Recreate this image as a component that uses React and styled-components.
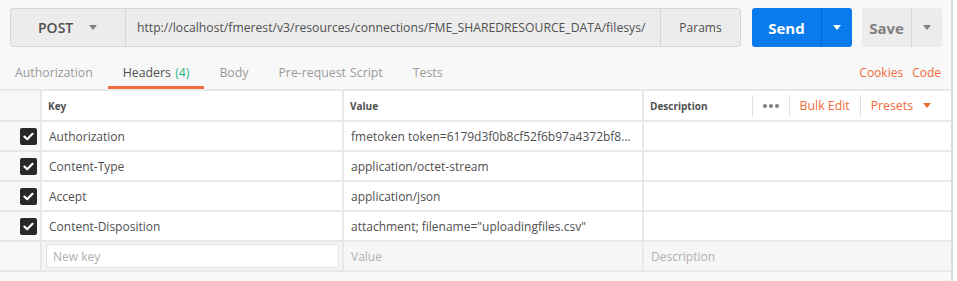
import React from "react"
import styled, { createGlobalStyle } from "styled-components"

const GlobalStyle = createGlobalStyle`
  html, body {
    margin: 0;
    padding: 0;
    background: #ffffff;
  }
  body {
    font-family: "Open Sans", "Liberation Sans", sans-serif;
    color: #505050;
  }
`

const Page = styled.div`
  width: 953px;
  height: 281px;
  box-sizing: border-box;
  background: #f8f8f8;
  border-right: 2px solid #dcdcdc;
  overflow: hidden;
`

const TopBar = styled.div`
  display: flex;
  align-items: stretch;
  padding: 8px 0 0 10px;
  height: 47px;
  box-sizing: border-box;
`

const UrlGroup = styled.div`
  display: flex;
  width: 731px;
  height: 39px;
  box-sizing: border-box;
  background: #ececec;
  border: 1px solid #d6d6d6;
  border-radius: 3px;
`

const MethodSelect = styled.div`
  width: 115px;
  display: flex;
  align-items: center;
  padding-left: 27px;
  box-sizing: border-box;
  font-size: 14px;
  font-weight: 600;
  color: #505050;
  border-right: 1px solid #d6d6d6;
  gap: 16px;
`

const Caret = styled.span`
  display: inline-block;
  width: 0;
  height: 0;
  border-left: ${(p) => p.size || 4}px solid transparent;
  border-right: ${(p) => p.size || 4}px solid transparent;
  border-top: ${(p) => (p.size || 4) + 1}px solid ${(p) => p.color || "#808080"};
`

const UrlText = styled.div`
  flex: 1;
  display: flex;
  align-items: center;
  padding-left: 11px;
  font-size: 12.2px;
  color: #505050;
  border-right: 1px solid #d6d6d6;
  white-space: nowrap;
  overflow: hidden;
`

const ParamsButton = styled.div`
  width: 79px;
  flex: none;
  display: flex;
  align-items: center;
  justify-content: center;
  font-size: 12px;
  color: #505050;
`

const SplitButton = styled.div`
  display: flex;
  width: ${(p) => p.width}px;
  height: 39px;
  margin-left: ${(p) => p.gap}px;
  border-radius: 3px;
  background: ${(p) => (p.primary ? "#097bed" : "#ececec")};
  color: ${(p) => (p.primary ? "#ffffff" : "#808080")};
  font-size: 15px;
  font-weight: 700;
`

const ButtonLabel = styled.div`
  flex: 1;
  display: flex;
  align-items: center;
  justify-content: center;
`

const ButtonArrow = styled.div`
  width: 30px;
  display: flex;
  align-items: center;
  justify-content: center;
  border-left: 1px solid ${(p) => (p.primary ? "#0468cf" : "#dadada")};
`

const TabRow = styled.div`
  display: flex;
  align-items: flex-end;
  height: 42px;
  box-sizing: border-box;
`

const Tab = styled.div`
  height: 32px;
  box-sizing: border-box;
  padding: 7px 15px 0;
  line-height: 18px;
  font-size: 12.3px;
  color: ${(p) => (p.active ? "#505050" : "#9a9a9a")};
  border-bottom: 3px solid ${(p) => (p.active ? "#f26b3a" : "transparent")};
  white-space: nowrap;
  word-spacing: 1px;
`

const Count = styled.span`
  color: #26b47f;
`

const TabLinks = styled.div`
  margin-left: auto;
  display: flex;
  gap: 9px;
  padding-right: 10px;
  height: 32px;
  box-sizing: border-box;
  padding-top: 7px;
  line-height: 18px;
`

const OrangeLink = styled.span`
  font-size: 12px;
  color: #f26b3a;
`

const Table = styled.div`
  display: grid;
  grid-template-columns: 40px 300px 298px 1fr;
  grid-auto-rows: 28px;
  grid-template-rows: 29px;
  gap: 2px;
  width: 951px;
  background: #e8e8e8;
  border-top: 2px solid #e8e8e8;
  border-bottom: 2px solid #e8e8e8;
`

const CheckCell = styled.div`
  background: #f8f8f8;
  display: flex;
  align-items: center;
  justify-content: flex-end;
  padding-right: 3px;
`

const HeadCell = styled.div`
  background: #ffffff;
  display: flex;
  align-items: center;
  padding-left: 6px;
  font-size: 10px;
  font-weight: 700;
  color: #505050;
`

const Cell = styled.div`
  background: ${(p) => (p.muted ? "#f6f6f6" : "#ffffff")};
  display: flex;
  align-items: center;
  padding-left: 7px;
  font-size: 12px;
  color: ${(p) => (p.placeholder ? "#b0b0b0" : "#505050")};
  white-space: nowrap;
  overflow: hidden;
`

const NewKeyInput = styled.div`
  flex: 1;
  margin: 0 3px 0 -3px;
  height: 24px;
  box-sizing: border-box;
  background: #ffffff;
  border: 1px solid #e3e3e3;
  display: flex;
  align-items: center;
  padding-left: 6px;
  color: #b0b0b0;
`

const Tools = styled.div`
  margin-left: auto;
  display: flex;
  align-items: center;
  height: 100%;
  padding-right: 10px;
`

const Divider = styled.span`
  width: 1px;
  height: 22px;
  background: #e3e3e3;
`

const ToolItem = styled.span`
  display: flex;
  align-items: center;
  gap: 10px;
  padding: 0 10px;
  font-size: 12.3px;
  font-weight: 400;
  color: #f26b3a;
`

const Dots = styled.span`
  display: flex;
  gap: 2px;
  padding: 0 10px;
  span {
    width: 4px;
    height: 4px;
    border-radius: 50%;
    background: #808080;
  }
`

const Box = styled.div`
  width: 17px;
  height: 17px;
  border-radius: 2px;
  background: #282828;
  display: flex;
  align-items: center;
  justify-content: center;
`

const Checkbox = () => (
  <Box>
    <svg width="11" height="9" viewBox="0 0 11 9">
      <path d="M1.5 4.6 L4.2 7.2 L9.5 1.8" fill="none" stroke="#ffffff" strokeWidth="2.2" strokeLinecap="round" strokeLinejoin="round" />
    </svg>
  </Box>
)

const headers = [
  ["Authorization", "fmetoken token=6179d3f0b8cf52f6b97a4372bf8..."],
  ["Content-Type", "application/octet-stream"],
  ["Accept", "application/json"],
  ["Content-Disposition", 'attachment; filename="uploadingfiles.csv"'],
]

const App = () => {
  return (
    <>
      <GlobalStyle />
      <Page>
        <TopBar>
          <UrlGroup>
            <MethodSelect>
              POST <Caret />
            </MethodSelect>
            <UrlText>http://localhost/fmerest/v3/resources/connections/FME_SHAREDRESOURCE_DATA/filesys/</UrlText>
            <ParamsButton>Params</ParamsButton>
          </UrlGroup>
          <SplitButton primary width={100} gap={11}>
            <ButtonLabel>Send</ButtonLabel>
            <ButtonArrow primary>
              <Caret color="#ffffff" />
            </ButtonArrow>
          </SplitButton>
          <SplitButton width={80} gap={10}>
            <ButtonLabel>Save</ButtonLabel>
            <ButtonArrow>
              <Caret />
            </ButtonArrow>
          </SplitButton>
        </TopBar>

        <TabRow>
          <Tab>Authorization</Tab>
          <Tab active>
            Headers <Count>(4)</Count>
          </Tab>
          <Tab>Body</Tab>
          <Tab>Pre-request Script</Tab>
          <Tab>Tests</Tab>
          <TabLinks>
            <OrangeLink>Cookies</OrangeLink>
            <OrangeLink>Code</OrangeLink>
          </TabLinks>
        </TabRow>

        <Table>
          <CheckCell />
          <HeadCell>Key</HeadCell>
          <HeadCell>Value</HeadCell>
          <HeadCell>
            Description
            <Tools>
              <Divider />
              <Dots>
                <span />
                <span />
                <span />
              </Dots>
              <Divider />
              <ToolItem>Bulk Edit</ToolItem>
              <Divider />
              <ToolItem>
                Presets <Caret color="#f26b3a" />
              </ToolItem>
            </Tools>
          </HeadCell>

          {headers.map(([key, value]) => (
            <React.Fragment key={key}>
              <CheckCell>
                <Checkbox />
              </CheckCell>
              <Cell>{key}</Cell>
              <Cell>{value}</Cell>
              <Cell />
            </React.Fragment>
          ))}

          <CheckCell />
          <Cell muted>
            <NewKeyInput>New key</NewKeyInput>
          </Cell>
          <Cell muted placeholder>
            Value
          </Cell>
          <Cell muted placeholder>
            Description
          </Cell>
        </Table>
      </Page>
    </>
  )
}

export default App
